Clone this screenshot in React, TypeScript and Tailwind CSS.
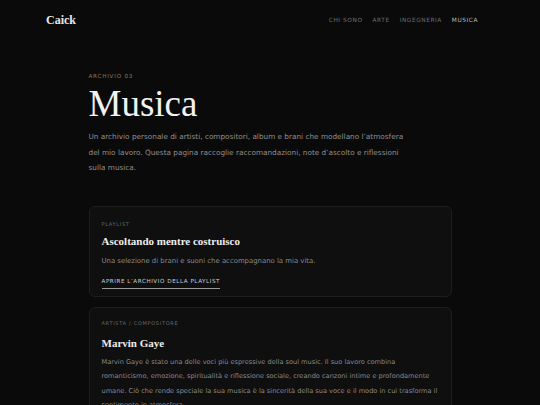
import React from "react";

const serif = "font-['Liberation_Serif','DejaVu_Serif',serif]";
const sans = "font-['DejaVu_Sans','Noto_Sans',sans-serif]";

export default function App() {
  return (
    <div className={`min-h-[405px] w-full bg-[#0a0a0a] text-white ${sans}`}>
      <header className="flex items-center justify-between px-[46px] pt-[11px] pb-[12px]">
        <div className={`${serif} text-[12px] font-bold text-[#e8e8e8]`}>Caick</div>
        <nav className="flex items-center gap-[10px] pr-[16px] text-[5.8px] uppercase tracking-[0.1em]">
          <span className="text-[#6e6e6e]">Chi sono</span>
          <span className="text-[#6e6e6e]">Arte</span>
          <span className="text-[#6e6e6e]">Ingegneria</span>
          <span className="text-[#bdbdbd]">Musica</span>
        </nav>
      </header>

      <main className="mx-auto w-[363px] pt-[31px]">
        <div className="text-[5.6px] uppercase tracking-[0.14em] text-[#8c7a50]">Archivio 03</div>
        <h1 className={`${serif} mt-[5px] text-[37px] leading-[38px] font-normal text-[#f2f2f2]`}>Musica</h1>
        <p className="mt-[6px] w-[324px] text-[7.3px] leading-[15.5px] text-[#8f8f8f]">
          Un archivio personale di artisti, compositori, album e brani che modellano l’atmosfera del mio lavoro. Questa pagina raccoglie raccomandazioni, note d’ascolto e riflessioni sulla musica.
        </p>

        <section className="mt-[30px] rounded-[6px] border border-[#1e1e1e] bg-[#0f0f0f] px-[12px] pt-[14px] pb-[6px]">
          <div className="text-[5px] uppercase tracking-[0.14em] text-[#6a6a6a]">Playlist</div>
          <h2 className={`${serif} mt-[5px] text-[11px] font-bold leading-[16px] text-[#ededed]`}>Ascoltando mentre costruisco</h2>
          <p className="mt-[7px] text-[6.9px] leading-[10px] text-[#8a8a8a]">Una selezione di brani e suoni che accompagnano la mia vita.</p>
          <div className="mt-[6px] inline-block border-b border-[#9a9a9a] pb-[2px] text-[5.6px] uppercase tracking-[0.1em] text-[#cfcfcf]">
            Aprire l’archivio della playlist
          </div>
        </section>

        <section className="mt-[10px] rounded-[6px] border border-[#1e1e1e] bg-[#0f0f0f] px-[12px] pt-[12px] pb-[12px]">
          <div className="text-[5px] uppercase tracking-[0.14em] text-[#6a6a6a]">Artista / Compositore</div>
          <h2 className={`${serif} mt-[7px] text-[11px] font-bold leading-[16px] text-[#ededed]`}>Marvin Gaye</h2>
          <p className="mt-[4px] text-[6.6px] leading-[14.5px] text-[#8a8a8a]">
            Marvin Gaye è stato una delle voci più espressive della soul music. Il suo lavoro combina romanticismo, emozione, spiritualità e riflessione sociale, creando canzoni intime e profondamente umane. Ciò che rende speciale la sua musica è la sincerità della sua voce e il modo in cui trasforma il sentimento in atmosfera.
          </p>
        </section>
      </main>
    </div>
  );
}
